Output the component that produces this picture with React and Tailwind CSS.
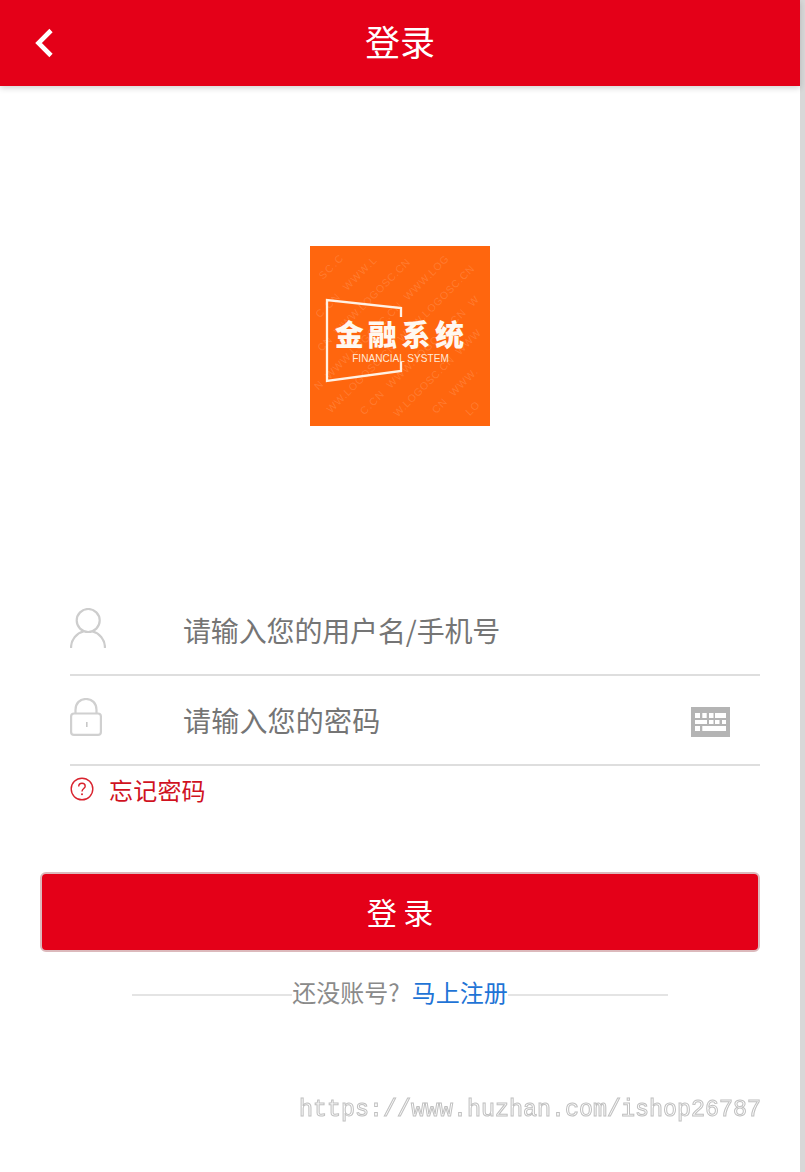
const cjk = { fontFamily: '"Noto Sans CJK SC", "Noto Sans", sans-serif' };

function watermarkRuns() {
  const word = "WWW.LOGOSC.CN  ";
  const pitch = 7.4;
  const runs = [];
  const c = Math.SQRT1_2;
  for (let k = -5; k <= 5; k++) {
    const d = k * 25 + 6;
    let first = null;
    let last = null;
    for (let i = -40; i <= 40; i++) {
      const t0 = i * pitch;
      const t1 = t0 + pitch;
      const inside = [t0, t1].every((t) => {
        const x = 90 + t * c + d * c;
        const y = 90 - t * c + d * c;
        return x > 8 && x < 172 && y > 12 && y < 172;
      });
      if (inside) {
        if (first === null) first = i;
        last = i;
      }
    }
    if (first === null) continue;
    const offset = k * 5;
    let s = "";
    for (let i = first; i <= last; i++) s += word[(((i + offset) % word.length) + word.length) % word.length];
    runs.push({
      k,
      x: 90 + first * pitch * c + d * c,
      y: 90 - first * pitch * c + d * c,
      s,
      len: s.length * pitch,
    });
  }
  return runs;
}

function Logo() {
  return (
    <svg width="180" height="180" viewBox="0 0 180 180" className="block">
      <rect width="180" height="180" fill="#ff660e" />
      <g>
        {watermarkRuns().map((r) => (
          <text key={r.k} x={r.x} y={r.y} fontSize="10.5" fill="#ffffff" fillOpacity="0.15" fontFamily="Liberation Sans, sans-serif" textLength={r.len} xmlSpace="preserve" transform={`rotate(-45 ${r.x} ${r.y})`}>
            {r.s}
          </text>
        ))}
      </g>
      <path d="M91 71V62L17 54V135L91 125V116" fill="none" stroke="#fff1e4" strokeWidth="2.300" />
      <text x="91.500" y="100" textAnchor="middle" fontSize="29" fontWeight="900" fill="#fff8f0" letterSpacing="4.400" fontFamily="Noto Sans CJK SC, sans-serif">金融系统</text>
      <text x="90.500" y="115.500" textAnchor="middle" fontSize="10.100" fill="#ffe9d8" fontFamily="Liberation Sans, sans-serif">FINANCIAL SYSTEM</text>
    </svg>
  );
}

function Chevron() {
  return (
    <svg width="20" height="30" viewBox="0 0 20 30" className="block">
      <path d="M17 2.500L4.500 15L17 27.500" fill="none" stroke="#fff" strokeWidth="4.600" />
    </svg>
  );
}

function UserIcon() {
  return (
    <svg width="36" height="40" viewBox="0 0 36 40" className="block">
      <circle cx="18.200" cy="12.500" r="11.500" fill="none" stroke="#cdcdcd" strokeWidth="2.200" />
      <path d="M1 40C1 31 7 25 13.500 23.500M35 40C35 31 29 25 22.500 23.500" fill="none" stroke="#cdcdcd" strokeWidth="2.200" />
    </svg>
  );
}

function LockIcon() {
  return (
    <svg width="32" height="38" viewBox="0 0 32 38" className="block">
      <path d="M5.500 15V12C5.500 5 10 1 16 1C22 1 26.500 5 26.500 12V15" fill="none" stroke="#d0d0d0" strokeWidth="2.200" />
      <rect x="1.100" y="15.500" width="29.800" height="21.400" rx="3" fill="none" stroke="#d0d0d0" strokeWidth="2.200" />
      <rect x="16" y="24" width="1.600" height="5" fill="#c8c8c8" />
    </svg>
  );
}

function KeyboardIcon() {
  const keys = [
    [4, 6, 5, 5], [11.300, 6, 4.400, 5], [18, 6, 4.500, 5], [24, 6, 11, 5],
    [4, 13, 12, 4], [18, 13, 4.500, 4], [24, 13, 4.500, 4], [31, 13, 4, 4],
    [4, 19, 5, 5], [11.300, 19, 23.700, 5],
  ];
  return (
    <svg width="39" height="30" viewBox="0 0 39 30" className="block">
      <rect width="39" height="30" fill="#b4b4b4" />
      {keys.map((k, i) => <rect key={i} x={k[0]} y={k[1]} width={k[2]} height={k[3]} fill="#fff" />)}
    </svg>
  );
}

function HelpIcon() {
  return (
    <svg width="24" height="24" viewBox="0 0 24 24" className="block">
      <circle cx="12" cy="12" r="10.800" fill="none" stroke="#d9232e" strokeWidth="1.400" />
      <path d="M8.700 9.500C8.700 7.500 10.200 6.300 12 6.300C13.800 6.300 15.200 7.500 15.200 9.200C15.200 11.500 12 11.700 12 14.500" fill="none" stroke="#d9232e" strokeWidth="1.400" />
      <circle cx="12" cy="17.300" r="1" fill="#d9232e" />
    </svg>
  );
}

export default function App() {
  return (
    <div className="flex w-[805px] h-[1172px] overflow-hidden bg-white" style={cjk}>
      <main className="w-[800px] flex flex-col">
        <header className="h-[86px] shrink-0 bg-[#e40018] shadow-[0_2px_6px_rgba(0,0,0,0.18)] flex items-center relative">
          <div className="pl-[34px] w-[100px] shrink-0"><Chevron /></div>
          <h1 className="flex-1 text-center text-white text-[35px] leading-[82px] pb-[4px] font-normal pr-[100px]">登录</h1>
        </header>

        <div className="mt-[160px] flex justify-center"><Logo /></div>

        <form className="mt-[160px] ml-[70px] mr-[40px] flex flex-col">
          <div className="h-[90px] border-b-2 border-[#dedede] flex">
            <div className="w-[113px] pt-[22px] shrink-0"><UserIcon /></div>
            <input placeholder="请输入您的用户名/手机号" className="flex-1 min-w-0 outline-none text-[28px] tracking-[-0.15px] h-[87px] placeholder:text-[#757575] text-[#757575]" />
          </div>
          <div className="h-[90px] border-b-2 border-[#dedede] flex">
            <div className="w-[113px] pt-[22px] shrink-0"><LockIcon /></div>
            <input placeholder="请输入您的密码" className="flex-1 min-w-0 outline-none text-[28px] tracking-[0.2px] h-[87px] placeholder:text-[#757575] text-[#757575]" />
            <div className="w-[69px] pt-[31px] shrink-0"><KeyboardIcon /></div>
          </div>
          <div className="h-[50px] flex items-center gap-[15px] text-[#d0121f] text-[24px]">
            <div className="pb-[4px]"><HelpIcon /></div>
            <span className="leading-[36px] pb-[3px] tracking-[0.2px]">忘记密码</span>
          </div>
        </form>

        <button className="mt-[56px] mx-[40px] h-[80px] shrink-0 bg-[#e40018] border-2 border-[#dcb9bc] rounded-[6px] text-white text-[30px] pb-[2px]">登 录</button>

        <div className="mt-[23px] mx-[132px] flex items-center h-[40px] text-[24px]">
          <div className="flex-1 h-[2px] bg-[#e4e4e4]" />
          <span className="text-[#8a8a8a] pb-[6px]">还没账号?</span>
          <span className="text-[#1f74d6] ml-[12px] pb-[6px]">马上注册</span>
          <div className="flex-1 h-[2px] bg-[#e4e4e4]" />
        </div>

        <div className="mt-[80px] pr-[39px] text-right text-[23.330px] leading-[30px] text-white [will-change:transform] [-webkit-text-stroke:1px_#c0c0c0]" style={{ fontFamily: '"Liberation Mono", monospace' }}>
          https://www.huzhan.com/ishop26787
        </div>
      </main>
      <div className="w-[5px] bg-[#d8d8d8]" />
    </div>
  );
}
